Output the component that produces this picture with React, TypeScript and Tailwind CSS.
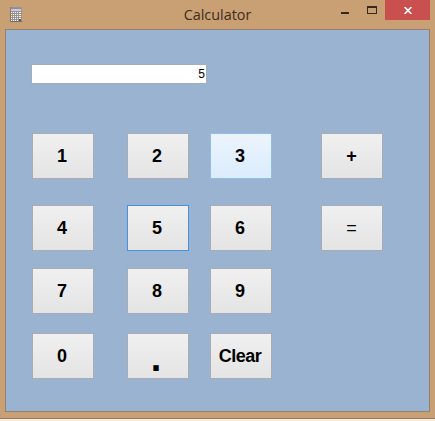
import { useState } from "react";
import clsx from "clsx";

type Key = { label: string; textClass?: string } | null;

const KEYS: Key[] = [
  { label: "1" }, { label: "2" }, { label: "3" }, { label: "+", textClass: "pr-px text-[18px]" },
  { label: "4" }, { label: "5" }, { label: "6" }, { label: "=", textClass: "pr-px text-[18px] font-normal" },
  { label: "7" }, { label: "8" }, { label: "9" }, null,
  { label: "0" }, { label: ".", textClass: "pr-[4px] pt-[4px] text-[38px] leading-[38px]" }, { label: "Clear", textClass: "pr-[2px] text-[18px] tracking-[-0.5px]" }, null,
];

function CalculatorIcon() {
  return (
    <svg width="13" height="16" viewBox="0 0 13 16" shapeRendering="crispEdges">
      <rect x="0" y="0" width="12" height="15" fill="#9b928c" />
      <rect x="0" y="0" width="1" height="15" fill="#86786e" />
      <rect x="0" y="14" width="12" height="1" fill="#756c68" />
      <rect x="1" y="1" width="10" height="3" fill="#c9c8e2" />
      <rect x="1" y="1" width="10" height="1" fill="#9389a4" />
      {[5, 7, 9, 11, 13].map((y) =>
        [1, 3, 5, 7, 9].map((x) => (
          <rect key={`${x}-${y}`} x={x} y={y} width={x === 9 ? 2 : 1} height="1" fill="#f6f4f2" />
        )),
      )}
      <rect x="9" y="12" width="2" height="2" fill="#5c566a" />
    </svg>
  );
}

function TitleBar() {
  return (
    <header className="flex h-[29px] items-start pl-[10px] pr-[5px]">
      <div className="w-[120px] pt-[7px]">
        <CalculatorIcon />
      </div>
      <h1 className="w-[175px] pt-[5px] text-center font-['Open_Sans',sans-serif] text-[14.4px] leading-[20px] text-[#3f2c1c]">
        Calculator
      </h1>
      <div className="ml-auto flex h-5">
        <button aria-label="Minimize" className="flex w-[26px] pl-[4px] pt-[12px]">
          <span className="block h-[2px] w-2 bg-[#35291c]" />
        </button>
        <button aria-label="Maximize" className="flex w-[22px] pl-[4px] pt-[6px]">
          <span className="block h-2 w-[10px] border border-t-2 border-[#35291c]" />
        </button>
        <button aria-label="Close" className="flex w-[45px] justify-center bg-[#c9504f] pt-[7px]">
          <svg width="8" height="7" viewBox="0 0 8 7" stroke="white" strokeWidth="1.6">
            <path d="M.6 0 7.4 7M7.4 0 .6 7" />
          </svg>
        </button>
      </div>
    </header>
  );
}

export default function App() {
  const [display, setDisplay] = useState("5");

  const press = (label: string) => {
    if (label === "Clear") setDisplay("");
    else if (/[0-9.]/.test(label)) setDisplay((v) => v + label);
  };

  return (
    <div className="h-[421px] w-[435px] bg-[#fdeee2]">
      <div className="h-[419px] border-b border-[#9c7962] bg-[#c9a073]">
        <TitleBar />
        <main className="ml-[5px] h-[383px] w-[425px] border border-[#947f72] bg-[#99b3d1] pl-[25px] pt-[34px] font-['Liberation_Sans',Arial,sans-serif]">
          <div className="h-5 w-[176px] border border-[#a5adb8] bg-white pr-px text-right text-[12px] leading-[18px] text-black">
            {display}
          </div>
          <div className="ml-px mt-[49px] grid grid-cols-[95px_83px_111px_62px] grid-rows-[72px_63px_65px_46px]">
            {KEYS.map((key, i) =>
              key ? (
                <button
                  key={key.label}
                  onClick={() => press(key.label)}
                  className={clsx(
                    "flex h-[46px] w-[62px] items-center justify-center border bg-linear-to-b text-black",
                    key.label !== "=" && "font-bold",
                    key.label === "3"
                      ? "border-[#8fbfe8] from-[#ebf4fd] to-[#dbecfc]"
                      : "from-[#f0f0f0] to-[#e4e4e4]",
                    key.label === "5" && "border-[#4592e2]",
                    key.label !== "3" && key.label !== "5" && "border-[#a9acb2]",
                    key.textClass ?? "pr-[2px] text-[18px]",
                  )}
                >
                  {key.label}
                </button>
              ) : (
                <span key={i} />
              ),
            )}
          </div>
        </main>
      </div>
    </div>
  );
}
